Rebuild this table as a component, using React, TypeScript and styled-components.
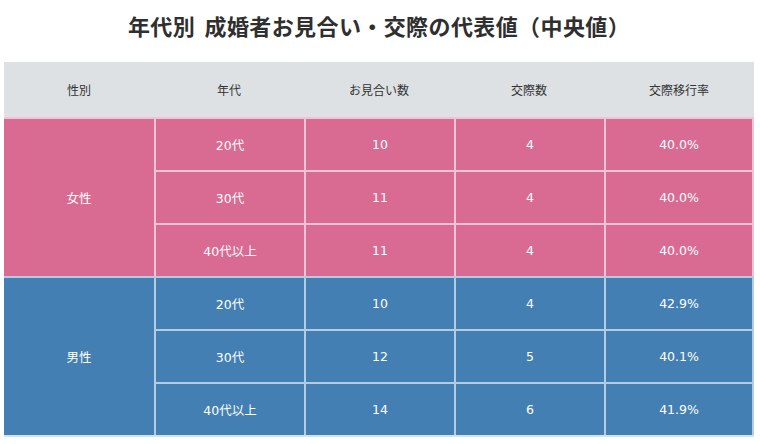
import React from 'react';
import styled, { createGlobalStyle } from 'styled-components';

const GlobalStyle = createGlobalStyle`
  body {
    margin: 0;
    background: #ffffff;
    font-family: "DejaVu Sans", "Noto Sans CJK JP", sans-serif;
  }
`;

const Page = styled.div`
  width: 760px;
  height: 444px;
  padding: 8px 6px 0 4px;
  box-sizing: border-box;
`;

const Title = styled.h1`
  margin: 0 0 20px;
  height: 34px;
  line-height: 34px;
  text-align: center;
  font-family: "Noto Sans CJK JP", sans-serif;
  font-size: 22px;
  font-weight: 700;
  color: #2f2f2f;
  letter-spacing: 0.4px;
  word-spacing: 4px;
`;

const Table = styled.div`
  display: grid;
  grid-template-columns: repeat(5, 150px);
  grid-template-rows: 55px repeat(6, 53px);
  width: 750px;
  border-bottom: 2px solid #cfe3f3;
`;

const HeadCell = styled.div`
  background: #dde1e4;
  color: #333;
  font-size: 12px;
  display: flex;
  align-items: center;
  justify-content: center;
`;

type Tone = 'female' | 'male';

const tones: Record<Tone, string> = {
  female: '#d96b93',
  male: '#447fb4',
};

const Cell = styled.div<{ $tone: Tone; $span?: number; $first?: boolean }>`
  grid-row: span ${(p) => p.$span ?? 1};
  background: ${(p) => tones[p.$tone]};
  color: #ffffff;
  font-size: 12.5px;
  display: flex;
  align-items: center;
  justify-content: center;
  box-sizing: border-box;
  border-top: 2px solid rgba(255, 255, 255, 0.6);
  border-left: ${(p) => (p.$first ? 'none' : '2px solid rgba(255, 255, 255, 0.6)')};
`;

const LastCell = styled(Cell)`
  border-right: 2px solid rgba(255, 255, 255, 0.6);
`;

const headers = ['性別', '年代', 'お見合い数', '交際数', '交際移行率'];

const groups: { label: string; tone: Tone; rows: string[][] }[] = [
  {
    label: '女性',
    tone: 'female',
    rows: [
      ['20代', '10', '4', '40.0%'],
      ['30代', '11', '4', '40.0%'],
      ['40代以上', '11', '4', '40.0%'],
    ],
  },
  {
    label: '男性',
    tone: 'male',
    rows: [
      ['20代', '10', '4', '42.9%'],
      ['30代', '12', '5', '40.1%'],
      ['40代以上', '14', '6', '41.9%'],
    ],
  },
];

const App: React.FC = () => {
  return (
    <Page>
      <GlobalStyle />
      <Title>年代別 成婚者お見合い・交際の代表値（中央値）</Title>
      <Table>
        {headers.map((h) => (
          <HeadCell key={h}>{h}</HeadCell>
        ))}
        {groups.map((g) => (
          <React.Fragment key={g.label}>
            {g.rows.map((r, i) => (
              <React.Fragment key={r[0]}>
                {i === 0 && (
                  <Cell $tone={g.tone} $span={3} $first>
                    {g.label}
                  </Cell>
                )}
                <Cell $tone={g.tone}>{r[0]}</Cell>
                <Cell $tone={g.tone}>{r[1]}</Cell>
                <Cell $tone={g.tone}>{r[2]}</Cell>
                <LastCell $tone={g.tone}>{r[3]}</LastCell>
              </React.Fragment>
            ))}
          </React.Fragment>
        ))}
      </Table>
    </Page>
  );
};

export default App;
